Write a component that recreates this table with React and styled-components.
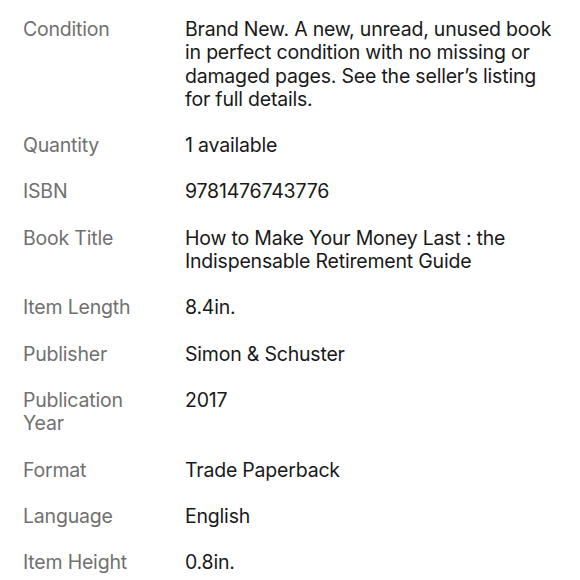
import React from 'react'
import styled, { createGlobalStyle } from 'styled-components'

const GlobalStyle = createGlobalStyle`
  body {
    margin: 0;
    background: #fff;
    font-family: Inter, "Noto Sans", Arial, sans-serif;
  }
`

const List = styled.dl`
  margin: 0;
  padding: 18px 20px 0 23px;
  display: flex;
  flex-direction: column;
  gap: 23px;
`

const Row = styled.div`
  display: grid;
  grid-template-columns: 150px 1fr;
  column-gap: 12px;
  font-size: 19.5px;
  line-height: 23.3px;
  letter-spacing: -0.2px;
`

const Label = styled.dt`
  margin: 0;
  max-width: 132px;
  color: #707070;
`

const Value = styled.dd`
  margin: 0;
  color: #191919;
`

const specs = [
  ['Condition', 'Brand New. A new, unread, unused book in perfect condition with no missing or damaged pages. See the seller\u2019s listing for full details.'],
  ['Quantity', '1 available'],
  ['ISBN', '9781476743776'],
  ['Book Title', 'How to Make Your Money Last : the Indispensable Retirement Guide'],
  ['Item Length', '8.4in.'],
  ['Publisher', 'Simon & Schuster'],
  ['Publication Year', '2017'],
  ['Format', 'Trade Paperback'],
  ['Language', 'English'],
  ['Item Height', '0.8in.'],
]

const App = () => {
  return (
    <>
      <GlobalStyle />
      <List>
        {specs.map(([label, value]) => (
          <Row key={label}>
            <Label>{label}</Label>
            <Value>{value}</Value>
          </Row>
        ))}
      </List>
    </>
  )
}

export default App
